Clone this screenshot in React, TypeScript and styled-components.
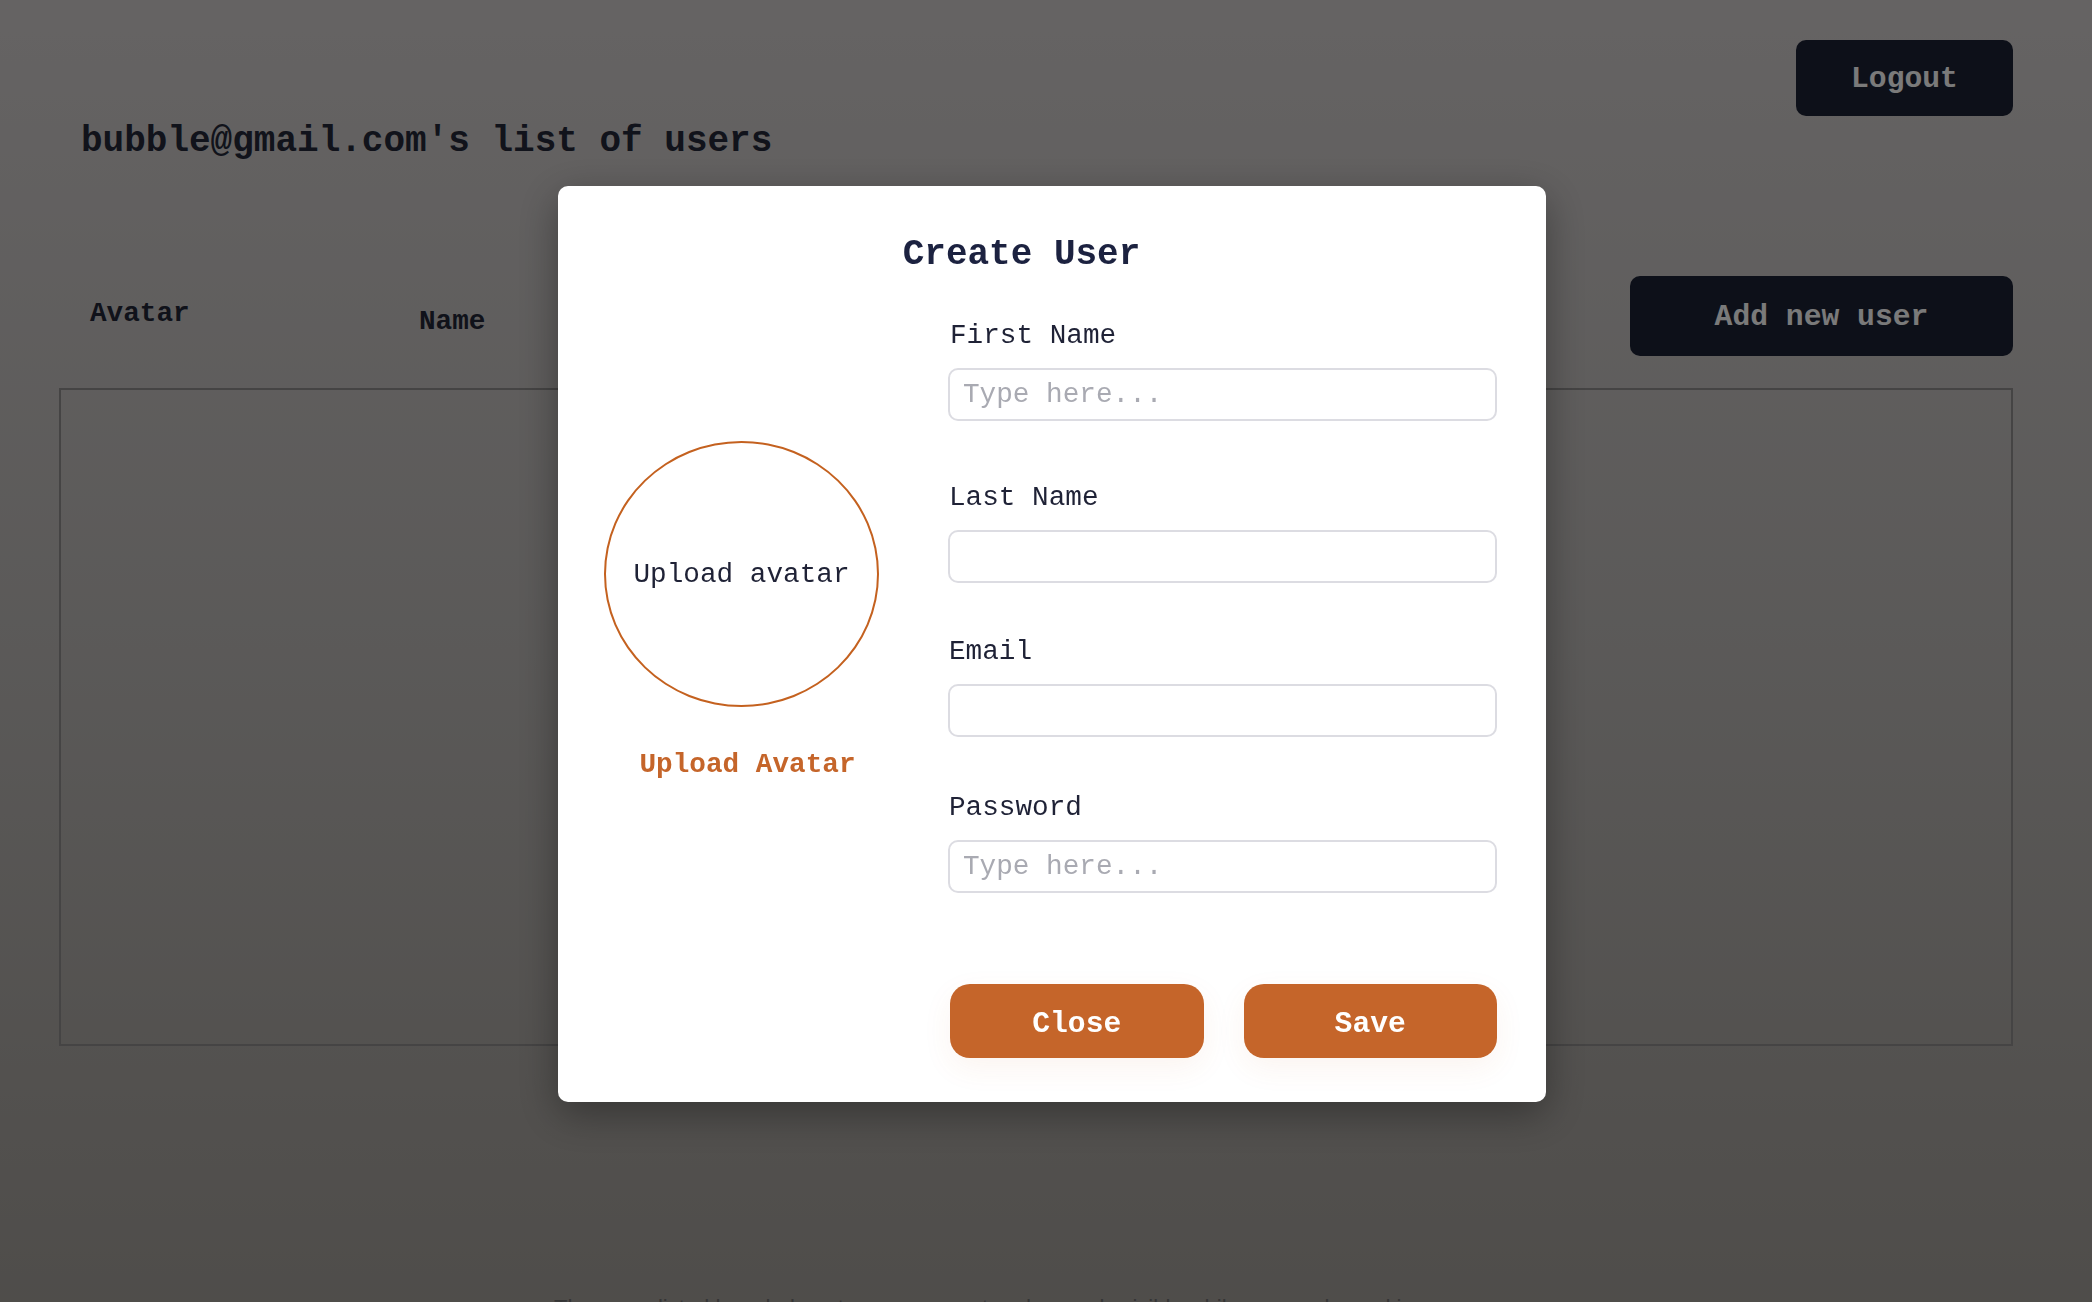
import React from "react";
import styled, { createGlobalStyle } from "styled-components";

const GlobalStyle = createGlobalStyle`
  html, body {
    margin: 0;
    padding: 0;
    height: 100%;
    overflow: hidden;
  }
  body {
    font-family: "Liberation Mono", "Courier New", monospace;
    background: linear-gradient(180deg, #cbc7c7 0%, #b6b3b1 50%, #9e9a95 100%);
  }
  #root {
    min-height: 100%;
  }
`;

const MONO = `"Liberation Mono", "Courier New", monospace`;

const Page = styled.div`
  box-sizing: border-box;
  min-height: 1302px;
  padding: 40px 79px 0 59px;
`;

const TopBar = styled.div`
  display: flex;
  justify-content: flex-end;
`;

const DarkButton = styled.button<{ $w: number; $h: number }>`
  width: ${(p) => p.$w}px;
  height: ${(p) => p.$h}px;
  background: #1a2032;
  color: #f5f5f5;
  border: none;
  border-radius: 10px;
  padding: 2px 0 0;
  font-family: ${MONO};
  font-weight: 700;
  font-size: 29.7px;
  cursor: pointer;
`;

const Heading = styled.h1`
  margin: 5px 0 0 22px;
  font-family: ${MONO};
  font-weight: 700;
  font-size: 36px;
  line-height: 41px;
  color: #232736;
`;

const Toolbar = styled.div`
  display: flex;
  align-items: center;
  margin-top: 114px;
`;

const HeaderCell = styled.div<{ $w: number; $pad?: number; $shift?: number }>`
  width: ${(p) => p.$w}px;
  box-sizing: border-box;
  padding-left: ${(p) => p.$pad ?? 0}px;
  margin-top: ${(p) => p.$shift ?? 0}px;
  font-family: ${MONO};
  font-weight: 700;
  font-size: 27.7px;
  line-height: 31px;
  color: #212535;
`;

const Spacer = styled.div`
  flex: 1;
`;

const TableBox = styled.div`
  margin-top: 32px;
  height: 658px;
  box-sizing: border-box;
  border: 2px solid #8a8888;
`;

const FooterNote = styled.p`
  margin: 248px 0 0 495px;
  font-family: "Liberation Sans", Arial, sans-serif;
  font-size: 22px;
  line-height: 28px;
  color: #6a6a6a;
`;

const Overlay = styled.div`
  position: fixed;
  inset: 0;
  background: rgba(0, 0, 0, 0.5);
  display: flex;
  align-items: center;
  justify-content: center;
  box-sizing: border-box;
  padding: 0 0 14px 12px;
`;

const Modal = styled.div`
  width: 988px;
  box-sizing: border-box;
  background: #ffffff;
  border-radius: 10px;
  padding: 48px 49px 44px 46px;
  box-shadow: 0 12px 40px rgba(0, 0, 0, 0.35);
`;

const Title = styled.h2`
  margin: 0 0 45px;
  padding-right: 58px;
  text-align: center;
  font-family: ${MONO};
  font-weight: 700;
  font-size: 36px;
  line-height: 41px;
  color: #1c2240;
`;

const Body = styled.div`
  display: grid;
  grid-template-columns: 275px 549px;
  column-gap: 69px;
  row-gap: 91px;
`;

const AvatarColumn = styled.div`
  grid-column: 1;
  grid-row: 1;
  align-self: center;
  display: flex;
  flex-direction: column;
  padding-top: 8px;
`;

const AvatarCircle = styled.button`
  width: 275px;
  height: 266px;
  box-sizing: border-box;
  border-radius: 50%;
  border: 2px solid #c4611f;
  background: transparent;
  display: flex;
  align-items: center;
  justify-content: center;
  padding: 0;
  font-family: ${MONO};
  font-size: 27.7px;
  line-height: 31px;
  color: #1f2236;
  cursor: pointer;
`;

const UploadLink = styled.div`
  margin-top: 42px;
  padding-left: 12px;
  text-align: center;
  font-family: ${MONO};
  font-weight: 700;
  font-size: 27.7px;
  line-height: 31px;
  color: #c5652a;
`;

const FormColumn = styled.div`
  grid-column: 2;
  grid-row: 1;
  display: flex;
  flex-direction: column;
`;

const Field = styled.div<{ $gap: number }>`
  margin-top: ${(p) => p.$gap}px;
  display: flex;
  flex-direction: column;
`;

const Label = styled.label<{ $indent?: number }>`
  display: block;
  margin-bottom: 17px;
  padding-left: ${(p) => p.$indent ?? 1}px;
  font-family: ${MONO};
  font-size: 27.7px;
  line-height: 31px;
  color: #1f2236;
`;

const Input = styled.input`
  width: 100%;
  height: 53px;
  box-sizing: border-box;
  border: 2px solid #dcdce2;
  border-radius: 10px;
  padding: 0 13px;
  font-family: ${MONO};
  font-size: 27.7px;
  color: #1f2236;
  background: #fff;
  outline: none;
  &::placeholder {
    color: #a9aab2;
  }
`;

const Actions = styled.div`
  grid-column: 2;
  grid-row: 2;
  display: grid;
  grid-template-columns: 1fr 1fr;
  column-gap: 40px;
  padding-left: 2px;
`;

const OrangeButton = styled.button`
  height: 74px;
  border: none;
  border-radius: 20px;
  background: #c5652a;
  color: #ffffff;
  padding: 5px 0 0;
  font-family: ${MONO};
  font-weight: 700;
  font-size: 29.7px;
  cursor: pointer;
  box-shadow: 0 10px 30px rgba(197, 101, 42, 0.07);
`;

const fields = [
  { label: "First Name", placeholder: "Type here...", gap: 0, indent: 2, type: "text" },
  { label: "Last Name", placeholder: "", gap: 61, indent: 1, type: "text" },
  { label: "Email", placeholder: "", gap: 53, indent: 1, type: "email" },
  { label: "Password", placeholder: "Type here...", gap: 55, indent: 1, type: "password" },
];

export default function App() {
  return (
    <>
      <GlobalStyle />
      <Page>
        <TopBar>
          <DarkButton $w={217} $h={76}>Logout</DarkButton>
        </TopBar>
        <Heading>bubble@gmail.com's list of users</Heading>
        <Toolbar>
          <HeaderCell $w={360} $pad={31} $shift={-6}>Avatar</HeaderCell>
          <HeaderCell $w={380} $shift={10}>Name</HeaderCell>
          <HeaderCell $w={300}>Email</HeaderCell>
          <Spacer />
          <DarkButton $w={383} $h={80}>Add new user</DarkButton>
        </Toolbar>
        <TableBox />
        <FooterNote>
          The users listed here belong to your account and are only visible while you are logged in.
        </FooterNote>
      </Page>
      <Overlay>
        <Modal>
          <Title>Create User</Title>
          <Body>
            <AvatarColumn>
              <AvatarCircle>Upload avatar</AvatarCircle>
              <UploadLink>Upload Avatar</UploadLink>
            </AvatarColumn>
            <FormColumn>
              {fields.map((f) => (
                <Field key={f.label} $gap={f.gap}>
                  <Label $indent={f.indent}>{f.label}</Label>
                  <Input type={f.type} placeholder={f.placeholder} />
                </Field>
              ))}
            </FormColumn>
            <Actions>
              <OrangeButton>Close</OrangeButton>
              <OrangeButton>Save</OrangeButton>
            </Actions>
          </Body>
        </Modal>
      </Overlay>
    </>
  );
}
